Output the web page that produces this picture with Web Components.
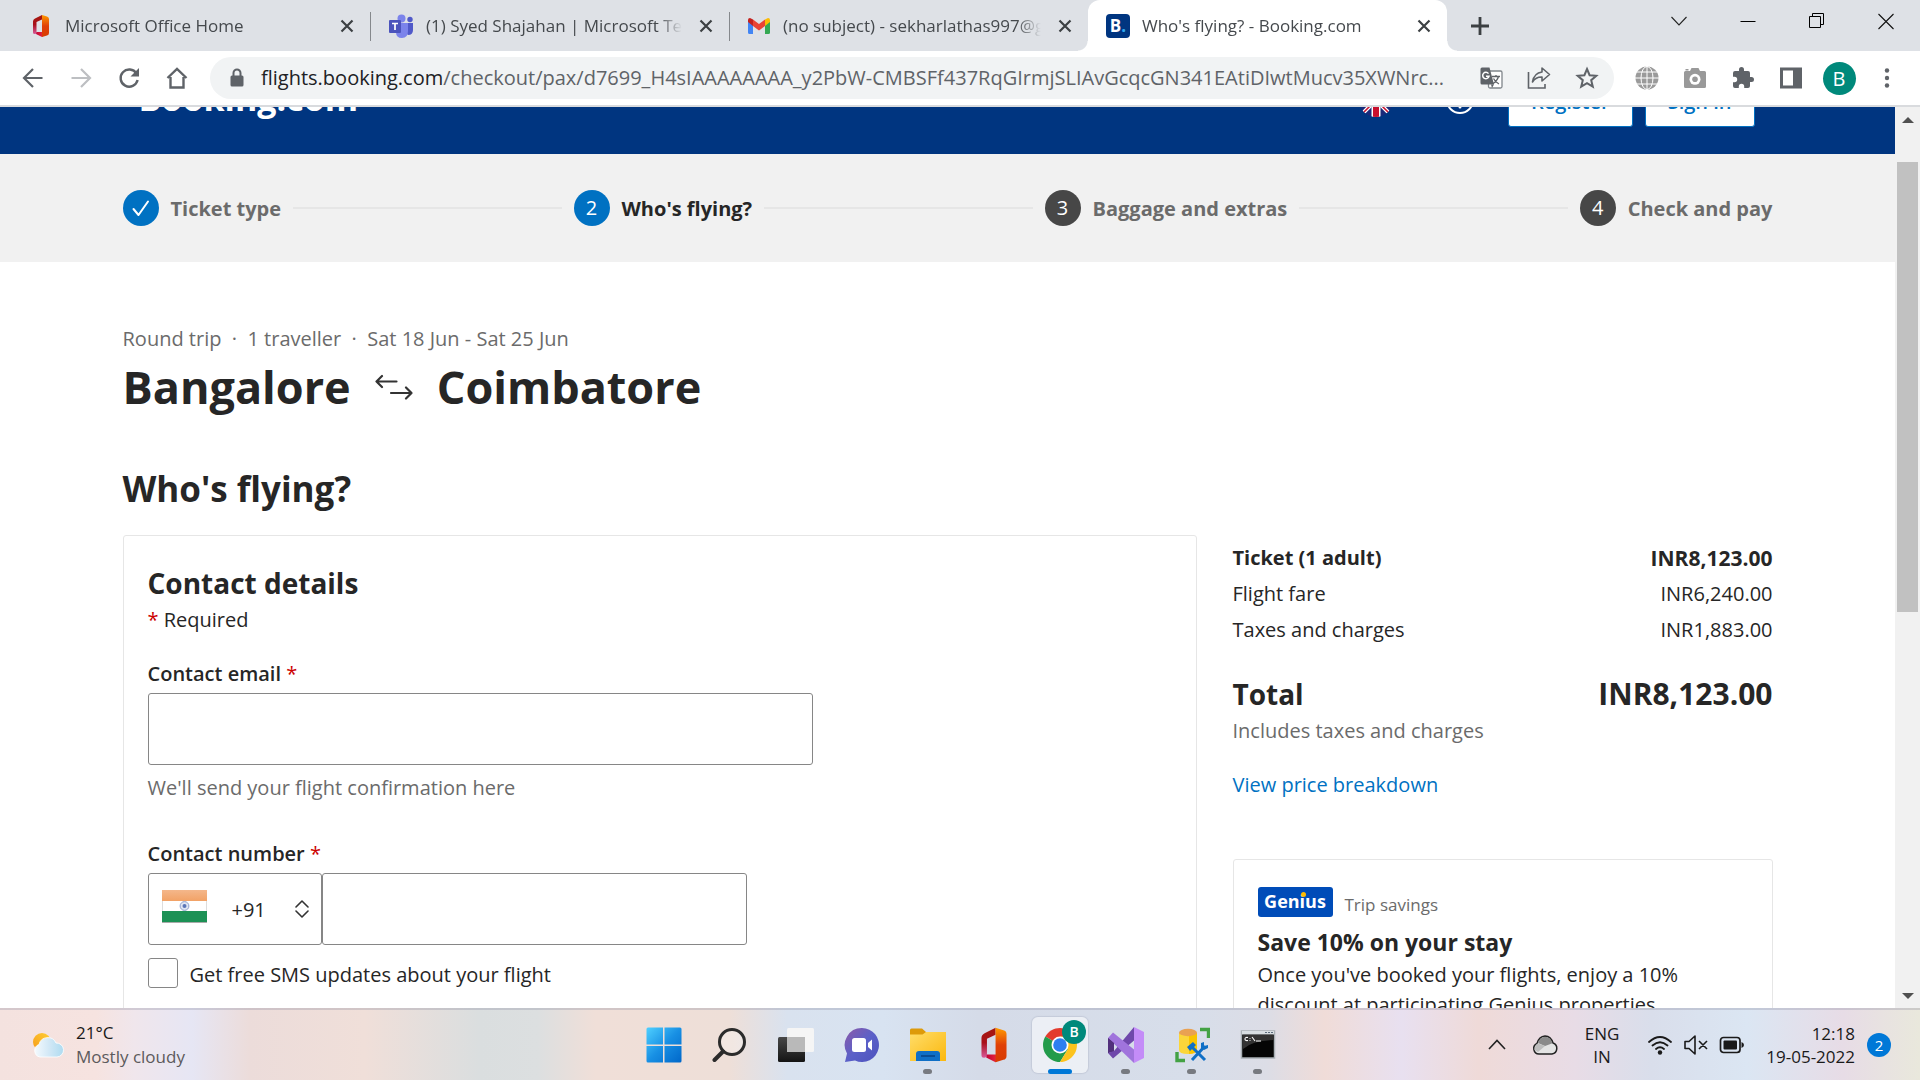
<!DOCTYPE html>
<html lang="en">
<head>
<meta charset="utf-8">
<title>Who's flying? - Booking.com</title>
<style>
html,body{margin:0;height:100%}
body{font-family:"Open Sans","Noto Sans",sans-serif;color:#262626;background:#fff;overflow:hidden}
</style>
</head>
<body>
<desktop-screen></desktop-screen>
<script>
const define = (name, css, html) => {
  const t = document.createElement('template');
  t.innerHTML = `<style>*{box-sizing:border-box}h1,h2,h3,p,dl,dd,dt{margin:0}button,input,select{font:inherit;color:inherit}button{border:0;background:none;padding:0}${css}</style>${html}`;
  customElements.define(name, class extends HTMLElement {
    constructor() { super(); this.attachShadow({mode: 'open'}).append(t.content.cloneNode(true)); }
  });
};

/* name: [width, height, viewBox, markup] */
const office = '<defs><linearGradient id="a" x1="0" y1="0" x2="0" y2="1"><stop offset="0" stop-color="#a5180e"/><stop offset=".5" stop-color="#a8101a"/><stop offset="1" stop-color="#d85a9a"/></linearGradient><linearGradient id="b" x1="0" y1="0" x2="0" y2="1"><stop offset="0" stop-color="#ff9a00"/><stop offset=".5" stop-color="#e04006"/><stop offset="1" stop-color="#d83b01"/></linearGradient><linearGradient id="c"><stop offset="0" stop-color="#c00038"/><stop offset="1" stop-color="#f0303a"/></linearGradient></defs><path d="M18 0 4 7Q0 9 0 13v22q0 4 5 3l2-2V14l11-5z" fill="url(#a)"/><path d="M6 38l12 6 4-5v-5H7z" fill="url(#c)"/><path d="M18 0l10 3q4 1 4 5v28q0 4-4 5l-10 3z" fill="url(#b)"/>';
const ICONS = {
  office: [24,24,'-8 -1 48 46',office],
  officeBig: [36,36,'-6 -1 44 46',office],
  teams: [26,26,'0 0 26 26','<circle cx="13.500" cy="5.500" r="4" fill="#7b83eb"/><circle cx="22" cy="6.500" r="2.700" fill="#5059c9"/><path d="M18 10h7v7q0 5-5 5l-2-2z" fill="#5059c9"/><path d="M8 10h12v8q0 7-6 7t-6-6z" fill="#7b83eb"/><rect x="1" y="7" width="12" height="13" rx="1" fill="#4b53bc"/><path d="M4 10.500h6M7 10.500V17" stroke="#fff" stroke-width="1.700" fill="none"/>'],
  gmail: [24,24,'0 0 24 24','<path d="M1 20V6l5 4v10H2.500Q1 20 1 18.500z" fill="#4285f4"/><path d="M18 10l5-4v12.500q0 1.500-1.500 1.500H18z" fill="#34a853"/><path d="M1 8V6q0-2 2-2l3 1.500V12z" fill="#c5221f"/><path d="M18 5.500 21 4q2 0 2 2v2l-5 4z" fill="#fbbc04"/><path d="M6 5.500l6 4.500 6-4.500V12l-6 4.500L6 12z" fill="#ea4335"/>'],
  close: [24,24,'0 0 24 24','<path d="M6.500 6.500l11 11m0-11l-11 11" stroke="#3c4043" stroke-width="2.200"/>'],
  plus: [24,24,'0 0 24 24','<path d="M12 3v18M3 12h18" stroke="#3c4043" stroke-width="2.800"/>'],
  wDown: [24,24,'0 0 24 24','<path d="M4.500 8l7.500 8 7.500-8" fill="none" stroke="#222" stroke-width="1.100"/>'],
  wMin: [24,24,'0 0 24 24','<path d="M4.500 12.500h15" stroke="#000"/>'],
  wMax: [24,24,'0 0 24 24','<path d="M4.500 7.500h11v11h-11zM7.500 7V4.500h11v11H16" fill="none" stroke="#000"/>'],
  wClose: [24,24,'0 0 24 24','<path d="M4.500 5l15 15m0-15l-15 15" stroke="#111" stroke-width="1.100"/>'],
  back: [24,24,'0 0 24 24','<path d="M21.500 12H4M12 3l-9 9 9 9" fill="none" stroke="#5f6368" stroke-width="2.200"/>'],
  fwd: [24,24,'0 0 24 24','<path d="M2.500 12H20M12 3l9 9-9 9" fill="none" stroke="#bdbfc2" stroke-width="2.200"/>'],
  reload: [24,24,'0 0 24 24','<path d="M19.500 7.500A8.600 8.600 0 1 0 20.600 14" fill="none" stroke="#5f6368" stroke-width="2.400"/><path d="M22 2v8.500h-8.500z" fill="#5f6368"/>'],
  home: [24,24,'0 0 24 24','<path d="M2.500 12 12 3l9.500 9M5.500 11v10.500h13V11" fill="none" stroke="#5f6368" stroke-width="2.400"/>'],
  lock: [18,20,'0 0 18 20','<path d="M5.500 8V5a3.500 3.500 0 0 1 7 0v3" fill="none" stroke="#5f6368" stroke-width="2"/><rect x="2.500" y="7.500" width="13" height="11" rx="1.500" fill="#5f6368"/>'],
  translate: [24,24,'0 0 24 24','<rect x="9.500" y="5" width="13.500" height="17" rx="1.500" fill="#fff" stroke="#80868b" stroke-width="1.300"/><path d="M13 10.500h8M17 9v1.500M19.500 10.500q-1 4-6 7.500M14.500 12.500q2 4 5.500 5.500" fill="none" stroke="#5f6368" stroke-width="1.300"/><path d="M2.500 1.500h8l4.500 17h-12q-1.500 0-1.500-1.500V3q0-1.500 1.500-1.500z" fill="#5f6368"/><path d="M9.500 7.600A3.200 3.200 0 1 0 10 10.300H7" fill="none" stroke="#fff" stroke-width="1.500"/><path d="M12 18.500h3L13 22z" fill="#5f6368"/>'],
  share: [24,24,'0 0 24 24','<path d="M1.500 6v16h16.500v-4" fill="none" stroke="#5f6368" stroke-width="1.600"/><path d="M15 2l7.500 6.500L15 15v-4q-6-.3-9.500 5Q7 7 15 6z" fill="none" stroke="#5f6368" stroke-width="1.600" stroke-linejoin="round"/>'],
  star: [24,24,'0 0 24 24','<path d="M12 3l2.600 6.200 6.700.6-5.100 4.400 1.600 6.500L12 17.200l-5.800 3.500 1.600-6.500-5.100-4.400 6.700-.6z" fill="none" stroke="#5f6368" stroke-width="2"/>'],
  globe: [24,24,'0 0 24 24','<circle cx="12" cy="12" r="11.500" fill="#9a9a9a"/><g fill="none" stroke="#fff" stroke-width="1"><path d="M12 0v24M0 12h24M2 6h20M2 18h20"/><ellipse cx="12" cy="12" rx="6" ry="11.500"/></g>'],
  camera: [24,24,'0 0 24 24','<path d="M1 6.500q0-1.500 1.500-1.500H7l1.500-3h7L17 5h4.500Q23 5 23 6.500v14q0 1.500-1.500 1.500h-19Q1 22 1 20.500z" fill="#999"/><circle cx="12" cy="13.300" r="5.500" fill="#fff"/><circle cx="12" cy="13.300" r="2.800" fill="#999"/><path d="M2.500 3h3v1.500h-3z" fill="#999"/>'],
  puzzle: [24,24,'0 0 24 24','<path d="M20.500 11H19V7q0-2-2-2h-4V3.500a2.500 2.500 0 0 0-5 0V5H4Q2 5 2 7v3.800h1.500a2.700 2.700 0 0 1 0 5.400H2V20q0 2 2 2h3.800v-1.500a2.700 2.700 0 0 1 5.400 0V22H17q2 0 2-2v-4h1.500a2.500 2.500 0 0 0 0-5z" fill="#5f6368"/>'],
  panel: [24,24,'0 0 24 24','<path d="M1 1.500h22v21H1zM4 4.500v15h10v-15z" fill="#5f6368" fill-rule="evenodd"/>'],
  dots: [24,24,'0 0 24 24','<g fill="#5f6368"><circle cx="12" cy="4.500" r="2.200"/><circle cx="12" cy="12" r="2.200"/><circle cx="12" cy="19.500" r="2.200"/></g>'],
  flagUK: [34,34,'0 0 34 34','<defs><clipPath id="a"><circle cx="17" cy="17" r="17"/></clipPath></defs><g clip-path="url(#a)"><path fill="#1a2a7a" d="M0 0h34v34H0z"/><path d="M0 0l34 34M34 0L0 34" stroke="#fff" stroke-width="4"/><path d="M0 0l34 34M34 0L0 34" stroke="#c8102e" stroke-width="1.500"/><path d="M17 0v34M0 17h34" stroke="#fff" stroke-width="9"/><path d="M17 0v34M0 17h34" stroke="#c8102e" stroke-width="6"/></g>'],
  help: [30,30,'0 0 30 30','<circle cx="15" cy="15" r="13" fill="none" stroke="#fff" stroke-width="2"/><path d="M11 12a4 4 0 1 1 6 3.500q-2 1-2 3" fill="none" stroke="#fff" stroke-width="2"/><circle cx="15" cy="22" r="1.500" fill="#fff"/>'],
  check: [24,24,'0 0 24 24','<path d="M4.500 13l5 6 9.500-13.500" fill="none" stroke="#fff" stroke-width="2" stroke-linecap="round" stroke-linejoin="round"/>'],
  swap: [38,38,'0 0 38 38','<path d="M21.500 13.500H1.500M7 8l-5.500 5.500L7 19M16 25h20.500M31 19.500l5.500 5.500L31 30.500" fill="none" stroke="#333" stroke-width="2.200" stroke-linecap="round" stroke-linejoin="round"/>'],
  flagIN: [45,33,'0 0 45 33','<defs><linearGradient id="a" x1="0" y1="0" x2="0" y2="1"><stop offset="0" stop-color="#f4b78b"/><stop offset="1" stop-color="#f2a266"/></linearGradient></defs><path fill="#fff" d="M0 0h45v32H0z"/><path fill="url(#a)" d="M0 0h45v11H0z"/><path fill="#1c9155" d="M0 21h45v11H0z"/><path fill="#aaa" d="M0 32h45v1H0z"/><path d="M.5 11v10M44.500 11v10" stroke="#ddd"/><circle cx="22.500" cy="16" r="4.400" fill="#dfe5f2" stroke="#8fa2cf"/><circle cx="22.500" cy="16" r="2" fill="#5b76b8"/>'],
  updown: [16,18,'0 0 16 18','<path d="M2 7l6-6 6 6M2 11l6 6 6-6" fill="none" stroke="#333" stroke-width="1.600" stroke-linecap="round" stroke-linejoin="round"/>'],
  up: [12,12,'0 0 12 12','<path d="M0 9h12L6 3z" fill="#505050"/>'],
  down: [12,12,'0 0 12 12','<path d="M0 3h12L6 9z" fill="#505050"/>'],
  weather: [36,28,'0 0 36 28','<defs><linearGradient id="a"><stop offset="0" stop-color="#f4fafe"/><stop offset=".5" stop-color="#d2e8f6"/><stop offset="1" stop-color="#aedbf0"/></linearGradient><linearGradient id="b" x1="0" y1="1" x2="1" y2="0"><stop offset="0" stop-color="#f59a1b"/><stop offset="1" stop-color="#ffd034"/></linearGradient></defs><circle cx="12" cy="11" r="9" fill="url(#b)"/><path d="M10 26a6.500 6.500 0 0 1-1-12.500A9 9 0 0 1 26 12a7 7 0 0 1 1 14z" fill="url(#a)" stroke="#fff" stroke-width=".8"/>'],
  start: [36,36,'0 0 36 36','<defs><linearGradient id="a" x1="0" y1="0" x2="1" y2="1"><stop offset="0" stop-color="#4fd0ff"/><stop offset=".5" stop-color="#1890e4"/><stop offset="1" stop-color="#0067c9"/></linearGradient></defs><path d="M0.500 2q0-1.500 1.500-1.500h15v17H.5zM18.500.5H34q1.500 0 1.500 1.500v15.500h-17zM.5 19h16.500v16.500H2q-1.500 0-1.500-1.500zM18.500 19h17v15q0 1.500-1.500 1.500H18.500z" fill="url(#a)"/>'],
  search: [36,36,'0 0 36 36','<circle cx="20" cy="15" r="12.500" fill="#fff" fill-opacity=".25" stroke="#2b2b2b" stroke-width="3"/><path d="M11 24.500l-8.500 8.500" stroke="#2b2b2b" stroke-width="4" stroke-linecap="round"/>'],
  taskview: [36,36,'0 0 36 36','<defs><linearGradient id="a" x1="0" y1="0" x2="0" y2="1"><stop offset="0" stop-color="#484848"/><stop offset="1" stop-color="#141414"/></linearGradient></defs><rect y="10" width="27" height="25" rx="1.500" fill="url(#a)"/><rect x="9" y="1" width="27" height="24" rx="1.500" fill="#f5f5f5"/><path d="M9 10h18v15H9z" fill="#b9b9b9"/>'],
  chat: [36,36,'0 0 36 36','<defs><linearGradient id="a" x1="0" y1="0" x2="1" y2="1"><stop offset="0" stop-color="#8d5aa8"/><stop offset=".5" stop-color="#5b60c8"/><stop offset="1" stop-color="#4d52bd"/></linearGradient></defs><path d="M18 1a17 17 0 1 1-7 32.500L1 35l2-8.500A17 17 0 0 1 18 1z" fill="url(#a)"/><rect x="8" y="11" width="14" height="14" rx="2.500" fill="#fff"/><path d="M24 16l4-3.500v11L24 20z" fill="#fff"/>'],
  folder: [36,36,'0 0 36 36','<defs><linearGradient id="a" x1="0" y1="0" x2="1" y2="1"><stop offset="0" stop-color="#ffdd6a"/><stop offset="1" stop-color="#fbb80e"/></linearGradient></defs><path d="M0 3q0-1.500 1.500-1.500H12l4 3.500h20v5H0z" fill="#dd9a0a"/><path d="M0 7.500h12.500L16 5h20v29H0z" fill="url(#a)"/><path d="M6 34V27q0-3 3-3h18q3 0 3 3v7z" fill="#0f6fc6"/><path d="M11 29h14" stroke="#07468a" stroke-width="1.600"/>'],
  chrome: [36,36,'0 0 36 36','<path d="M18 18 3.300 9.500A17 17 0 0 1 32.700 9.500z" fill="#e33b2e"/><path d="M18 18 3.300 9.500A17 17 0 0 0 18 35l8-13z" fill="#239b4b"/><path d="M18 18l8 4-8 13A17 17 0 0 0 32.700 9.500H18z" fill="#fcc31e"/><circle cx="18" cy="18" r="8.500" fill="#fff"/><circle cx="18" cy="18" r="6.800" fill="#2d7ff0"/>'],
  vs: [36,36,'0 0 36 36','<path d="M0 11l6 4v10L0 26z" fill="#52307c"/><path d="M0 26l5 5.500 21-18V0L6 24z" fill="#6f48ab"/><path d="M0 11l5-5.500 21 17V36z" fill="#a074dc"/><path d="M0 11v15l6-5v-5z" fill="#52307c"/><path d="M26 0l10 5v26l-10 5z" fill="#c48cf8"/>'],
  sql: [36,36,'0 0 36 36','<path d="M5 6v17q0 4 9 4t9-4V6z" fill="#fbd63a"/><path d="M15 6h8v17q0 3-8 4z" fill="#f9c400"/><ellipse cx="14" cy="5.500" rx="9" ry="3.700" fill="#e9a152"/><path d="M26 2.500h8.500V11M3 25v8.500h8" fill="none" stroke="#43a244" stroke-width="3.400"/><path d="M17 19l14 14M31 19L18 33" stroke="#0f6fc6" stroke-width="3"/><path d="M13 20l6-5 3 3-6 6zM27 21V16l3-1v4l4-1v3l-4 2z" fill="#0f6fc6"/>'],
  cmd: [36,36,'0 0 36 36','<path d="M1.500 4h33v27h-33z" fill="#050505" stroke="#a9b0b5" stroke-width="1.500"/><path d="M2 4h32v3.500H2z" fill="#d8dee2"/><path d="M25 5.500h2m1 0h2m1 0h2" stroke="#5a6a7a"/><path d="M3 8h31v5Q12 14 3 22z" fill="#333"/><path d="M8 10.500q-3-.5-3 1.500t3 1.500M10 11v.8m0 1.200v.8M12 10l3 4M16 14h5" fill="none" stroke="#fff" stroke-width="1.100"/>'],
  caret: [20,20,'0 0 20 20','<path d="M2 14l8-8.500 8 8.500" fill="none" stroke="#222" stroke-width="1.600"/>'],
  cloud: [26,26,'0 0 26 26','<path d="M7 22a5.500 5.500 0 0 1-2-10.500Q7 4.500 13 4q6 .3 8 7a5.700 5.700 0 0 1-1 11z" fill="#e4e4e4" stroke="#222" stroke-width="1.500"/><path d="M6 11q2-6 7-6.200 5.500.2 7.500 6.500L13 14z" fill="#8a8a8a"/><path d="M2.500 18Q3 12 6 11.500l7 2.500-7 6z" fill="#bdbdbd"/>'],
  wifi: [26,26,'0 0 26 26','<g fill="none" stroke="#1a1a1a" stroke-width="1.800" stroke-linecap="round"><path d="M2 10q11-10 22 0M5.500 13.500q7.500-6.500 15 0M9 17q4-3.500 8 0"/></g><circle cx="13" cy="20.500" r="2.200" fill="#1a1a1a"/>'],
  mute: [26,26,'0 0 26 26','<path d="M2 9.500h4L12 4v18l-6-5.500H2zM16 9l8 8m0-8l-8 8" fill="none" stroke="#1a1a1a" stroke-width="1.600" stroke-linejoin="round"/>'],
  battery: [26,26,'0 0 26 26','<rect x="1.500" y="5.500" width="19.500" height="15" rx="3" fill="none" stroke="#1a1a1a" stroke-width="1.700"/><rect x="4.500" y="8.500" width="13.500" height="9" rx="1" fill="#1a1a1a"/><path d="M22.500 10q2.500 1 2.500 3t-2.500 3z" fill="#1a1a1a"/>']
};
customElements.define('ui-icon', class extends HTMLElement {
  connectedCallback() {
    if (this.shadowRoot) return;
    const [w, h, box, body] = ICONS[this.getAttribute('name')];
    this.attachShadow({mode: 'open'}).innerHTML = `<style>:host{display:inline-flex;flex:none}svg{display:block}</style><svg width="${w}" height="${h}" viewBox="${box}" aria-hidden="true">${body}</svg>`;
  }
});

define('browser-tab', `
:host{display:flex;align-items:center;gap:12px;width:359px;height:51px;padding:0 11px 0 18px;position:relative;font-size:17px;color:#45494d;border-right:0}
.title{flex:1;min-width:0;overflow:hidden;white-space:nowrap;-webkit-mask-image:linear-gradient(90deg,#000 calc(100% - 24px),transparent)}
:host(:not([active]):not([last]))::after{content:"";position:absolute;right:-1px;top:12px;width:1px;height:29px;background:#85888c}
:host([active]){background:#fff;border-radius:12px 12px 0 0}
:host([active])::before,:host([active])::after{content:"";position:absolute;bottom:0;width:10px;height:10px}
:host([active])::before{left:-10px;background:radial-gradient(circle at 0 0,transparent 9px,#fff 10px)}
:host([active])::after{right:-10px;background:radial-gradient(circle at 100% 0,transparent 9px,#fff 10px)}
button{display:flex;width:24px;height:24px}`,
`<slot name="icon"></slot><span class="title"><slot></slot></span><button aria-label="Close tab"><ui-icon name="close"></ui-icon></button>`);

define('booking-favicon', `:host{display:flex;align-items:center;justify-content:center;width:24px;height:24px;border-radius:4px;background:#003580;color:#fff;font-weight:700;font-size:17px;line-height:24px}span{color:#2fa8ee}`, `B<span>.</span>`);

define('tab-strip', `
:host{display:flex;height:51px;background:#dee1e6;padding-left:11px}
.new{width:66px;display:flex;align-items:center;justify-content:center}
.win{margin-left:auto;display:flex;height:42px}
.win button{width:69px;display:flex;align-items:center;justify-content:center}`,
`<browser-tab><ui-icon slot="icon" name="office"></ui-icon>Microsoft Office Home</browser-tab>
<browser-tab><ui-icon slot="icon" name="teams"></ui-icon>(1) Syed Shajahan | Microsoft Teams</browser-tab>
<browser-tab last><ui-icon slot="icon" name="gmail"></ui-icon>(no subject) - sekharlathas997@gmail.com</browser-tab>
<browser-tab active><booking-favicon slot="icon"></booking-favicon>Who's flying? - Booking.com</browser-tab>
<button class="new" aria-label="New tab"><ui-icon name="plus"></ui-icon></button>
<div class="win"><button aria-label="Search tabs"><ui-icon name="wDown"></ui-icon></button><button aria-label="Minimise"><ui-icon name="wMin"></ui-icon></button><button aria-label="Restore"><ui-icon name="wMax"></ui-icon></button><button aria-label="Close"><ui-icon name="wClose"></ui-icon></button></div>`);

define('browser-toolbar', `
:host{display:flex;align-items:center;height:56px;padding:0 9px;background:#fff;border-bottom:2px solid #d9dbde}
button{width:48px;height:42px;display:flex;align-items:center;justify-content:center;flex:none}
.omni{flex:1;min-width:0;height:42px;margin:0 9px;padding:0 3px 0 18px;border-radius:21px;background:#f1f3f4;display:flex;align-items:center}
.url{flex:1;min-width:0;margin-left:15px;display:flex;overflow:hidden;white-space:nowrap;font-size:20px;line-height:30px;color:#5f6368}
.url b{font-weight:400;color:#202124}
.me{width:33px;height:33px;border-radius:50%;background:#00897b;color:#fff;font-size:20px;display:flex;align-items:center;justify-content:center}`,
`<button aria-label="Back"><ui-icon name="back"></ui-icon></button><button aria-label="Forward"><ui-icon name="fwd"></ui-icon></button><button aria-label="Reload"><ui-icon name="reload"></ui-icon></button><button aria-label="Home"><ui-icon name="home"></ui-icon></button>
<div class="omni"><ui-icon name="lock"></ui-icon><div class="url" role="textbox" aria-label="Address" contenteditable="true" spellcheck="false"><b>flights.booking.com</b><span>/checkout/pax/d7699_H4sIAAAAAAAA_y2PbW-CMBSFf437RqGIrmjSLIAvGcqcGN341EAtiDIwtMucv35XWNrc...</span></div><button aria-label="Translate"><ui-icon name="translate"></ui-icon></button><button aria-label="Share"><ui-icon name="share"></ui-icon></button><button aria-label="Bookmark"><ui-icon name="star"></ui-icon></button></div>
<button aria-label="Globe"><ui-icon name="globe"></ui-icon></button><button aria-label="Capture"><ui-icon name="camera"></ui-icon></button><button aria-label="Extensions"><ui-icon name="puzzle"></ui-icon></button><button aria-label="Side panel"><ui-icon name="panel"></ui-icon></button><button aria-label="Profile"><span class="me">B</span></button><button aria-label="Menu"><ui-icon name="dots"></ui-icon></button>`);

define('site-header', `
:host{display:block;background:#003580;margin-top:-61px}
.in{max-width:1650px;height:108px;margin:0 auto;padding:0 18px 0 16px;display:flex;align-items:center;color:#fff}
.logo{font:700 34px/48px "Open Sans",sans-serif;color:#fff;text-decoration:none;margin:0 auto 4px 0}
.icon{display:flex}
.help{margin:0 33px 0 52px}
.btn{height:54px;background:#fff;border:1px solid #0071c2;border-radius:3px;color:#0071c2;font-size:20px;font-weight:600;padding:2px 22px 0}
.btn+.btn{margin-left:12px}`,
`<div class="in"><a class="logo" href="#">Booking.com</a><button class="icon" aria-label="Language"><ui-icon name="flagUK"></ui-icon></button><button class="icon help" aria-label="Help"><ui-icon name="help"></ui-icon></button><button class="btn">Register</button><button class="btn">Sign in</button></div>`);

define('step-item', `
:host{display:flex;align-items:center;gap:12px;color:#6b6b6b;font-size:20px;line-height:30px;font-weight:700}
.dot{width:36px;height:36px;border-radius:50%;background:#474747;color:#fff;display:flex;align-items:center;justify-content:center;font-weight:400}
.name{padding-top:2px}
:host([state]) .dot{background:#0071c2}
:host([state=current]){color:#262626}`,
`<span class="dot"><slot name="mark"></slot></span><span class="name"><slot></slot></span>`);

define('step-bar', `
:host{display:block;background:#f1f1f1}
.in{max-width:1650px;height:108px;margin:0 auto;display:flex;align-items:center;gap:12px}
i{flex:1;height:2px;background:#e6e6e6}`,
`<div class="in"><step-item state="done"><ui-icon slot="mark" name="check"></ui-icon>Ticket type</step-item><i></i><step-item state="current"><span slot="mark">2</span>Who's flying?</step-item><i></i><step-item><span slot="mark">3</span>Baggage and extras</step-item><i></i><step-item><span slot="mark">4</span>Check and pay</step-item></div>`);

define('contact-form', `
:host{display:block;border:1px solid #e6e6e6;border-radius:3px;padding:26px 24px 48px;font-size:20px;line-height:30px}
h3{font-size:28px;line-height:43px;font-weight:700}
.req{color:#cc0000;font-weight:400}
label{display:block}
.lab{font-weight:600;margin-bottom:4px}
.box{height:72px;background:#fff;border:1px solid #868686;border-radius:3px;padding:0 12px}
.email{margin-top:24px}
.email input{display:block;width:100%;max-width:665px}
.hint{color:#6b6b6b;margin-top:8px}
.tel{margin-top:36px}
.row{display:flex;max-width:599px}
.cc{position:relative;flex:none}
select.box{width:174px;appearance:none;padding:2px 0 0 83px}
.cc .flag{position:absolute;left:14px;top:17px;pointer-events:none}
.cc .arr{position:absolute;right:12px;top:27px;pointer-events:none}
.row input{flex:1;min-width:0}
.sms{display:flex;align-items:center;gap:12px;margin-top:12px}
.sms label{padding-top:3px;margin-bottom:-1px}
.sms input{appearance:none;margin:0;width:30px;height:30px;border:1px solid #868686;border-radius:3px;background:#fff}`,
`<h3>Contact details</h3><p><span class="req">*</span> Required</p>
<div class="email"><label class="lab" for="e">Contact email <span class="req">*</span></label><input class="box" id="e" type="email"><p class="hint">We'll send your flight confirmation here</p></div>
<div class="tel"><label class="lab" for="n">Contact number <span class="req">*</span></label><div class="row"><div class="cc"><select class="box" aria-label="Country code"><option>+91</option></select><ui-icon class="flag" name="flagIN"></ui-icon><ui-icon class="arr" name="updown"></ui-icon></div><input class="box" id="n" type="tel"></div></div>
<div class="sms"><input type="checkbox" id="s"><label for="s">Get free SMS updates about your flight</label></div>`);

define('price-summary', `
:host{display:block;font-size:20px;line-height:30px;padding-top:8px}
dl{display:flex;flex-direction:column;gap:6px}
dl div{display:flex;justify-content:space-between}
.b{font-weight:700}
.b dd{font-size:21px}
.total{font-size:28px;line-height:42px;font-weight:700;margin-top:22px}
.total dd{font-size:30px}
.note{color:#6b6b6b;margin-top:1px}
a{display:inline-block;color:#0071c2;text-decoration:none;margin-top:24px}`,
`<dl><div class="b"><dt>Ticket (1 adult)</dt><dd>INR8,123.00</dd></div><div><dt>Flight fare</dt><dd>INR6,240.00</dd></div><div><dt>Taxes and charges</dt><dd>INR1,883.00</dd></div><div class="total"><dt>Total</dt><dd>INR8,123.00</dd></div></dl><p class="note">Includes taxes and charges</p><a href="#">View price breakdown</a>`);

define('genius-card', `
:host{display:block;border:1px solid #e6e6e6;border-radius:3px;padding:24px;font-size:20px;line-height:30px}
.top{display:flex;align-items:center;gap:12px}
.badge{width:75px;height:30px;border-radius:3px;background:#004cb8;color:#fff;font:700 18px/28px "Open Sans",sans-serif;text-align:center;position:relative}
.badge::after{content:"";position:absolute;left:43px;top:5px;width:5px;height:5px;border-radius:50%;background:#febb02}
.sub{font-size:17px;color:#6b6b6b;padding-top:6px}
h3{font-size:23px;line-height:36px;font-weight:700;margin-top:4px}`,
`<div class="top"><span class="badge">Genius</span><span class="sub">Trip savings</span></div><h3>Save 10% on your stay</h3><p>Once you've booked your flights, enjoy a 10% discount at participating Genius properties.</p>`);

define('flight-page', `
:host{display:block;flex:1;min-width:0;overflow:hidden;background:#fff}
main{max-width:1650px;margin:0 auto;padding-top:62px}
.meta{font-size:20px;line-height:30px;color:#6b6b6b;white-space:pre}
h1{font-size:45px;line-height:60px;font-weight:700;display:flex;align-items:center;gap:24px;margin-top:3px}
h2{font-size:35px;line-height:48px;font-weight:700;margin:48px 0 22px}
.cols{display:flex;gap:36px}
contact-form{flex:1}
aside{width:540px;flex:none}
genius-card{margin-top:59px}`,
`<site-header></site-header><step-bar></step-bar><main><p class="meta">Round trip  ·  1 traveller  ·  Sat 18 Jun - Sat 25 Jun</p><h1>Bangalore <ui-icon name="swap"></ui-icon> Coimbatore</h1><h2>Who's flying?</h2><div class="cols"><contact-form></contact-form><aside><price-summary></price-summary><genius-card></genius-card></aside></div></main>`);

define('scroll-bar', `
:host{display:flex;flex-direction:column;align-items:center;width:25px;background:#f1f1f1;padding:7px 0 6px}
.track{flex:1;width:100%;padding:36px 2px 0}
.thumb{height:450px;background:#c1c1c1}`,
`<ui-icon name="up"></ui-icon><div class="track"><div class="thumb"></div></div><ui-icon name="down"></ui-icon>`);

define('task-button', `
:host{display:flex;width:66px;height:100%;align-items:center;justify-content:center}
button{position:relative;width:56px;height:56px;border-radius:6px;display:flex;align-items:center;justify-content:center}
:host([active]) button{background:rgba(255,255,255,.55);box-shadow:0 0 1px 1px rgba(120,130,150,.18)}
:host([open]) button::after{content:"";position:absolute;bottom:-1px;left:50%;margin-left:-5px;width:9px;height:5px;border-radius:3px;background:#777a80}
:host([active]) button::after{margin-left:-12px;width:24px;background:#0078d7}`,
`<button part="b"><slot></slot></button>`);

define('task-bar', `
:host{display:grid;grid-template-columns:1fr auto 1fr;height:72px;border-top:2px solid rgba(130,130,150,.28);font-size:17px;line-height:24px;color:#1a1a1a;
background:linear-gradient(90deg,#f4e2df 0,#f6e3e0 5%,#f0e6ec 7%,#e6e6f4 10%,#ecdcda 13%,#f0dfd9 19%,#dadedf 25%,#dcdfe0 28%,#f0dfd8 31%,#eedfd8 38%,#d9e2ef 41%,#d8e3f1 46%,#d5dbe8 51%,#d7deea 62%,#dcdde6 66%,#f0dcd8 69%,#e8e0f0 73%,#efdad8 77%,#e8dce6 82%,#d9deeb 86%,#dbe6f3 91%,#e7dce6 96%,#e9e8dc 100%)}
.l{display:flex;align-items:center;gap:10px;padding-left:30px}
.l p+p{color:#5c5a5c}
.c{display:flex;padding-left:2px}
.r{display:flex;align-items:center;justify-content:flex-end;padding-right:29px;min-width:0}
.r>*{flex:none}
.lang{text-align:center;margin:0 28px 0 27px;line-height:23px}
.clock{text-align:right;line-height:23px;margin-left:21px}
.n{width:24px;height:24px;border-radius:50%;background:#0078d7;color:#fff;text-align:center;font-size:15px;margin-left:12px}
.g{margin-left:10px}
.cl{margin-left:25px}
.prof{position:absolute;left:30px;top:3px;width:24px;height:24px;border-radius:50%;background:#00897b;color:#fff;font-size:14px;font-weight:600;text-align:center}`,
`<div class="l"><ui-icon name="weather"></ui-icon><div><p>21°C</p><p>Mostly cloudy</p></div></div>
<div class="c"><task-button><ui-icon name="start"></ui-icon></task-button><task-button><ui-icon name="search"></ui-icon></task-button><task-button><ui-icon name="taskview"></ui-icon></task-button><task-button><ui-icon name="chat"></ui-icon></task-button><task-button open><ui-icon name="folder"></ui-icon></task-button><task-button><ui-icon name="officeBig"></ui-icon></task-button><task-button open active><ui-icon name="chrome"></ui-icon><span class="prof">B</span></task-button><task-button open><ui-icon name="vs"></ui-icon></task-button><task-button open><ui-icon name="sql"></ui-icon></task-button><task-button open><ui-icon name="cmd"></ui-icon></task-button></div>
<div class="r"><ui-icon name="caret"></ui-icon><ui-icon class="cl" name="cloud"></ui-icon><div class="lang">ENG<br>IN</div><ui-icon name="wifi"></ui-icon><ui-icon class="g" name="mute"></ui-icon><ui-icon class="g" name="battery"></ui-icon><div class="clock">12:18<br>19-05-2022</div><span class="n">2</span></div>`);

define('desktop-screen', `
:host{display:flex;flex-direction:column;height:100vh}
.view{flex:1;min-height:0;display:flex}
tab-strip,browser-toolbar,task-bar{flex:none}`,
`<tab-strip></tab-strip><browser-toolbar></browser-toolbar><div class="view"><flight-page></flight-page><scroll-bar></scroll-bar></div><task-bar></task-bar>`);
</script>
</body>
</html>
